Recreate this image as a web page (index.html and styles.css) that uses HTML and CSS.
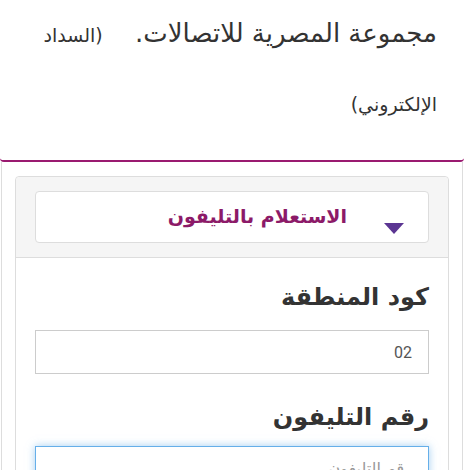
FILE: index.html
```html
<!DOCTYPE html>
<html lang="ar" dir="rtl">
<head>
<meta charset="utf-8">
<title>المصرية للاتصالات</title>
<link rel="stylesheet" href="styles.css">
</head>
<body>
<header class="site-header">
  <h1 class="site-title">مجموعة المصرية للاتصالات. <small class="site-sub">(السداد الإلكتروني)</small></h1>
</header>
<main class="wrap">
  <section class="panel">
    <div class="panel-heading">
      <div class="dropdown">
        <span class="dropdown-text">الاستعلام بالتليفون</span>
        <span class="caret"></span>
      </div>
    </div>
    <div class="panel-body">
      <label class="field-label" for="code">كود المنطقة</label>
      <input class="field-input" id="code" type="text" value="02">
      <label class="field-label second" for="phone">رقم التليفون</label>
      <input class="field-input focused" id="phone" type="text" placeholder="رقم التليفون">
    </div>
  </section>
</main>
</body>
</html>
```

FILE: styles.css
```css
html, body {
  margin: 0;
  padding: 0;
  background: #fff;
}
body {
  direction: rtl;
  font-family: "DejaVu Sans", "Noto Sans", sans-serif;
  color: #333;
}
.site-header {
  padding: 0 27px 22px 20px;
  border-bottom: 2px solid #9a1a70;
  border-radius: 0 0 4px 4px;
}
.site-title {
  margin: 0;
  font-size: 26px;
  font-weight: normal;
  line-height: 67px;
  color: #333;
}
.site-sub {
  font-family: "DejaVu Sans", sans-serif;
  font-size: 19px;
  color: #333;
  margin-right: 24px;
}
.wrap {
  margin: 0 1px;
  padding: 14px 13px 40px;
  border: 1px solid #ddd;
  border-top: none;
}
.panel {
  border: 1px solid #ddd;
  border-radius: 4px;
  background: #fff;
}
.panel-heading {
  background: #f5f5f5;
  border-bottom: 1px solid #ddd;
  border-radius: 4px 4px 0 0;
  padding: 14px 19px 14px;
}
.dropdown {
  position: relative;
  height: 50px;
  background: #fff;
  border: 1px solid #ddd;
  border-radius: 4px;
  display: flex;
  align-items: center;
  padding-right: 81px;
}
.dropdown-text {
  font-size: 19px;
  font-weight: bold;
  color: #8c1a68;
  margin-top: -3px;
}
.caret {
  position: absolute;
  right: 24px;
  top: 31px;
  width: 0;
  height: 0;
  border-left: 10px solid transparent;
  border-right: 10px solid transparent;
  border-top: 11px solid #5b3592;
}
.panel-body {
  padding: 22px 19px 0;
  display: flex;
  flex-direction: column;
}
.field-label {
  font-size: 24px;
  font-weight: bold;
  line-height: 34px;
  color: #333;
  margin-bottom: 16px;
}
.field-label.second {
  margin-top: 26px;
  margin-bottom: 12px;
}
.field-input {
  box-sizing: border-box;
  height: 44px;
  border: 1px solid #ccc;
  padding: 0 16px;
  font-family: Roboto, "DejaVu Sans", sans-serif;
  font-size: 16px;
  color: #555;
  outline: none;
  direction: rtl;
  background: #fff;
}
.field-input::placeholder {
  color: #999;
  font-family: "DejaVu Sans", sans-serif;
}
.field-input.focused {
  border-color: #66afe9;
  box-shadow: 0 0 8px rgba(102, 175, 233, 0.6);
}
```
